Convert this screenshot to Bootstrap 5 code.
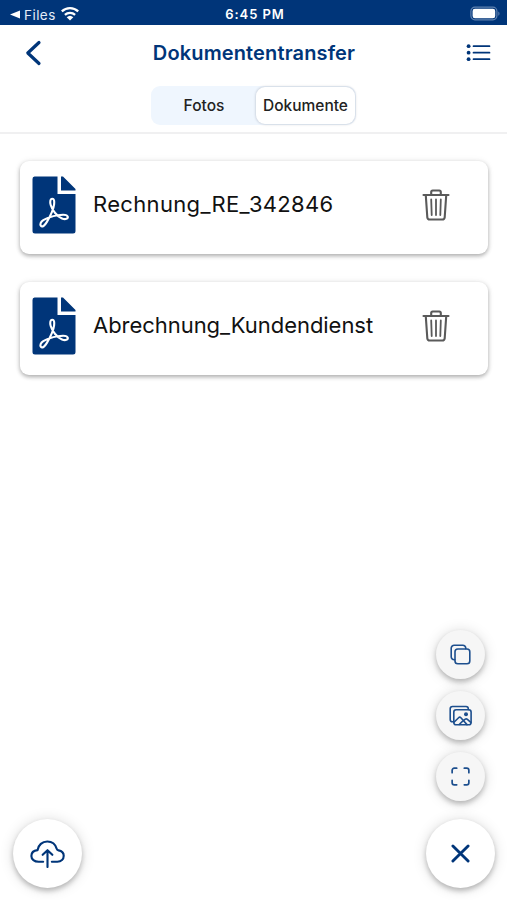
<!DOCTYPE html>
<html lang="de">
<head>
<meta charset="utf-8">
<meta name="viewport" content="width=device-width, initial-scale=1">
<title>Dokumententransfer</title>
<link href="https://cdn.jsdelivr.net/npm/bootstrap@5.3.0/dist/css/bootstrap.min.css" rel="stylesheet">
<style>
:root{--navy:#003579}
body{font-family:Inter,"Liberation Sans",sans-serif;color:#111;background:#fff;overflow:hidden}
svg{display:block;flex:none}
.screen{width:100%;height:900px}
.statusbar{height:25px;background:var(--navy);color:#fff;padding:0 7px 0 10px;display:grid;grid-template-columns:1fr auto 1fr}
.files{font-size:13.5px;letter-spacing:.45px;line-height:1;color:#e4ecf8}
.clock{font-size:13px;font-weight:600;letter-spacing:.95px;line-height:25px;padding-top:1.5px}
.topbar{height:55px;padding:0 16px 0 25px;color:var(--navy)}
.app-title{font-size:20px;font-weight:600;letter-spacing:.14px;line-height:24px}
.tabs-row{height:53.5px;padding-top:6px;border-bottom:2px solid #f0f0f1}
.segment{width:205px;height:39px;border-radius:9px;background:#eff6fe;padding:1px}
.segment .btn{font-size:15.5px;font-weight:500;line-height:20px;padding:0;border:0;color:#222;border-radius:9px}
.segment .seg-on{width:99px;background:#fff;box-shadow:0 0 2px 1px rgba(60,70,90,.16)}
.docs{padding:27.5px 19px 0 20px;gap:28.5px}
.doc{height:92.5px;border:0;border-radius:9px;padding:0 38.5px 5.5px 12px;box-shadow:0 2px 4px rgba(0,0,0,.3),0 0 7px rgba(0,0,0,.07)}
.doc-name{font-size:22px;line-height:28px;color:#111;margin:-1px 0 0 17px;letter-spacing:-.04px}
.doc-wide{letter-spacing:.33px}
.actions{padding:0 12px 12px 13px}
.fab{width:69px;height:69px;border-radius:50%;background:#fff;border:0;padding:0;color:var(--navy);box-shadow:0 3px 5px rgba(0,0,0,.22),0 1px 14px rgba(0,0,0,.15)}
.fab-mini{width:49px;height:49px;background:#f6f6f6;color:#1d4f8e;margin-bottom:12px}
.fab-last{margin-bottom:18px}
</style>
<script src="https://cdn.jsdelivr.net/npm/bootstrap@5.3.0/dist/js/bootstrap.bundle.min.js"></script>
</head>
<body>
<svg width="0" height="0" class="position-absolute" aria-hidden="true">
  <symbol id="pdf" viewBox="0 0 44 58">
    <path fill="#003579" d="M2.500 .5H25.500v17.500h18v37a2.500 2.500 0 0 1-2.500 2.500H3A2.500 2.500 0 0 1 .5 55V3A2.500 2.500 0 0 1 2.500 .5zM29 .5h2L43.500 13V14.500H29z"/>
    <path fill="none" stroke="#fff" stroke-width="2.100" stroke-linejoin="round" d="M20.300 22.800c-2.300 0-2.400 3.400-1.600 6.200 1.500 5.200 6.500 11.600 11.300 13.500 3.500 1.300 6.200.2 5.800-1.700-.5-2.300-5.500-2.400-10.300-1.500-5 .9-10.500 2.700-14.200 4.900-2.800 1.800-3.500 4.300-2.400 5.700 1.400 1.600 4-.6 6-4 3.200-5.400 6.600-12.400 7.200-17.500.4-3.600 0-5.600-1.800-5.600z"/>
  </symbol>
  <symbol id="bin" viewBox="0 0 28 32">
    <g fill="none" stroke="#5a5a5a" stroke-width="2.100" stroke-linecap="round" stroke-linejoin="round">
      <path d="M1.500 6h25M9.200 5.500V3a1.500 1.500 0 0 1 1.500-1.500h6.600A1.500 1.500 0 0 1 18.800 3v2.500M3.800 6.500l1.500 21.800a2.500 2.500 0 0 0 2.500 2.200h12.400a2.500 2.500 0 0 0 2.500-2.200l1.500-21.800"/>
      <path stroke-width="1.800" d="M9.200 10.500l.5 15.500M14 10.500V26M18.800 10.500l-.5 15.500"/>
    </g>
  </symbol>
</svg>

<main class="screen d-flex flex-column">
  <div class="statusbar">
    <div class="files d-flex align-items-center">
      <svg width="10" height="10" viewBox="0 0 10 10" class="mt-1"><path fill="#fff" d="M0 4.500 10 .5v8z"/></svg>
      <span class="ms-1 mt-1">Files</span>
      <svg class="ms-1" width="20" height="15" viewBox="0 0 20 15"><g fill="none" stroke="#fff" stroke-width="2.300"><path d="M1.800 5.400a12 12 0 0 1 16.400 0M4.900 8.800a7.500 7.500 0 0 1 10.200 0"/></g><path fill="#fff" d="M10 14.500 6.700 11.200a4.800 4.800 0 0 1 6.600 0z"/></svg>
    </div>
    <div class="clock">6:45 PM</div>
    <div class="d-flex justify-content-end align-items-center">
      <svg width="30" height="15" viewBox="0 0 30 15"><rect x=".9" y="1.200" width="26" height="12.600" rx="4" fill="none" stroke="#5f82b0" stroke-width="1.200"/><rect x="2.600" y="2.700" width="22.600" height="9.600" rx="2.300" fill="#fff"/><path d="M28.300 5.500v4.300c1.600-.7 1.600-3.600 0-4.300z" fill="#5f82b0"/></svg>
    </div>
  </div>

  <header class="topbar d-flex align-items-center justify-content-between">
    <svg width="17" height="26" viewBox="0 0 17 26"><path d="M14 2.500 2.800 13 14 23.500" fill="none" stroke="currentColor" stroke-width="3.200" stroke-linecap="round" stroke-linejoin="round"/></svg>
    <h1 class="app-title m-0">Dokumententransfer</h1>
    <svg width="25" height="18" viewBox="0 0 25 18"><g stroke="currentColor" stroke-width="1.700" stroke-linecap="round"><path d="M7.500 2.200h16M7.500 8.700h16M7.500 15.200h16"/></g><g fill="currentColor"><circle cx="2.600" cy="2.200" r="1.900"/><circle cx="2.600" cy="8.700" r="1.900"/><circle cx="2.600" cy="15.200" r="1.900"/></g></svg>
  </header>

  <div class="tabs-row d-flex justify-content-center">
    <div class="segment d-flex">
      <button class="btn flex-fill">Fotos</button>
      <button class="btn seg-on">Dokumente</button>
    </div>
  </div>

  <section class="docs d-flex flex-column flex-grow-1">
    <article class="card doc flex-row align-items-center">
      <svg width="44" height="58"><use href="#pdf"/></svg>
      <span class="doc-name doc-wide flex-grow-1">Rechnung_RE_342846</span>
      <svg width="28" height="32"><use href="#bin"/></svg>
    </article>
    <article class="card doc flex-row align-items-center">
      <svg width="44" height="58"><use href="#pdf"/></svg>
      <span class="doc-name flex-grow-1">Abrechnung_Kundendienst</span>
      <svg width="28" height="32"><use href="#bin"/></svg>
    </article>
  </section>

  <footer class="actions d-flex justify-content-between align-items-end">
    <button class="btn fab d-flex align-items-center justify-content-center" aria-label="Hochladen">
      <svg width="35" height="28" viewBox="0 0 36 29"><g fill="none" stroke="currentColor" stroke-width="2.200" stroke-linecap="round" stroke-linejoin="round"><path d="M13.500 22.500H8.800C4.300 22.500 1.300 20 1.300 16.500c0-3.300 2.700-5.600 6.400-6C8.500 5.300 12.500 1.500 17.800 1.500c4.700 0 8.400 3 9.600 7.400.3 1.100.8 1.600 2 1.800 3.200.6 5.400 2.700 5.400 5.700 0 3.600-2.600 6.100-6.600 6.100h-5.700"/><path d="M18 28V10.800M13 15.300l5-4.700 5 4.700"/></g></svg>
    </button>
    <div class="d-flex flex-column align-items-center">
      <button class="btn fab fab-mini d-flex align-items-center justify-content-center" aria-label="Kopieren">
        <svg width="22" height="22" viewBox="0 0 22 22"><g fill="none" stroke="currentColor" stroke-width="1.600" stroke-linejoin="round" stroke-linecap="round"><rect x="5" y="5" width="14.800" height="14.800" rx="2.800"/><path d="M4.800 15.700h-.6a3 3 0 0 1-3-3V4.200a3 3 0 0 1 3-3h8.600a3 3 0 0 1 3 3v.5"/></g></svg>
      </button>
      <button class="btn fab fab-mini d-flex align-items-center justify-content-center" aria-label="Galerie">
        <svg width="24" height="22" viewBox="0 0 24 22"><g fill="none" stroke="currentColor" stroke-width="1.600" stroke-linejoin="round" stroke-linecap="round"><rect x="4.800" y="4.800" width="17.300" height="15" rx="2.300"/><path d="M4.500 16.800H3.500A2.300 2.300 0 0 1 1.200 14.500V3.800a2.300 2.300 0 0 1 2.300-2.300h13.500a2.300 2.300 0 0 1 2.300 2.300v.8M5 17.300l4.600-4.500c.8-.8 1.500-.8 2.300 0l6.100 6.800M14.500 15.500l1.800-1.300c.7-.5 1.300-.4 1.800 0l3.700 3.200M10.200 19.500l4-3.800"/></g><circle cx="17" cy="9.300" r="2" fill="currentColor"/></svg>
      </button>
      <button class="btn fab fab-mini fab-last d-flex align-items-center justify-content-center" aria-label="Scannen">
        <svg width="19" height="19" viewBox="0 0 20 20"><path fill="none" stroke="currentColor" stroke-width="1.800" stroke-linecap="round" d="M1.200 6V3.500a2.300 2.300 0 0 1 2.300-2.300H6M14 1.200h2.500a2.300 2.300 0 0 1 2.300 2.300V6M18.800 14v2.500a2.300 2.300 0 0 1-2.300 2.300H14M6 18.800H3.500a2.300 2.300 0 0 1-2.300-2.300V14"/></svg>
      </button>
      <button class="btn fab d-flex align-items-center justify-content-center" aria-label="Schließen">
        <svg width="19" height="19" viewBox="0 0 20 20"><path stroke="currentColor" stroke-width="3" stroke-linecap="round" d="m2 2 16 16M18 2 2 18"/></svg>
      </button>
    </div>
  </footer>
</main>
</body>
</html>
